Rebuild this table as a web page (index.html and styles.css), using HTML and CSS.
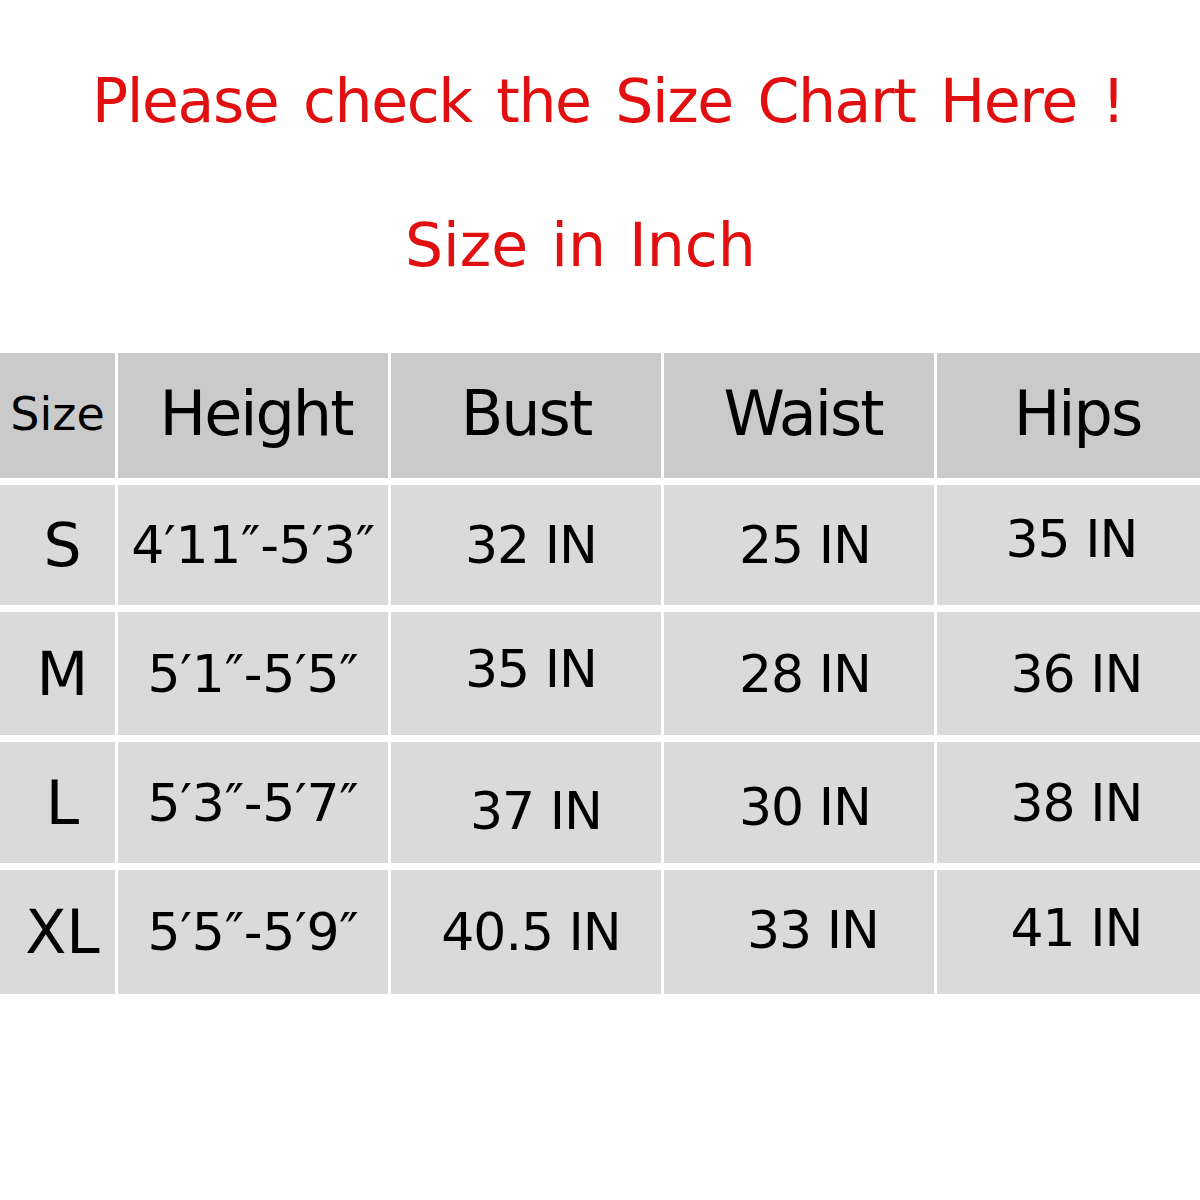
FILE: index.html
```html
<!DOCTYPE html>
<html>
<head>
<meta charset="utf-8">
<link rel="stylesheet" href="styles.css">
</head>
<body>
<div class="page">
  <h1 class="title title-main">Please check the Size Chart Here !</h1>
  <h2 class="title title-sub">Size in Inch</h2>
  <div class="chart">
    <div class="cell head head-size">Size</div>
    <div class="cell head h-height">Height</div>
    <div class="cell head">Bust</div>
    <div class="cell head h-waist">Waist</div>
    <div class="cell head h-hips">Hips</div>

    <div class="cell size">S</div>
    <div class="cell val c-height">4′11″-5′3″</div>
    <div class="cell val c-bust">32 IN</div>
    <div class="cell val c-waist">25 IN</div>
    <div class="cell val c-hips-s">35 IN</div>

    <div class="cell size">M</div>
    <div class="cell val c-height">5′1″-5′5″</div>
    <div class="cell val c-bust up-5">35 IN</div>
    <div class="cell val c-waist">28 IN</div>
    <div class="cell val c-hips">36 IN</div>

    <div class="cell size">L</div>
    <div class="cell val c-height">5′3″-5′7″</div>
    <div class="cell val c-bust-l">37 IN</div>
    <div class="cell val c-waist down-4">30 IN</div>
    <div class="cell val c-hips">38 IN</div>

    <div class="cell size">XL</div>
    <div class="cell val c-height">5′5″-5′9″</div>
    <div class="cell val c-bust">40.5 IN</div>
    <div class="cell val c-waist-xl">33 IN</div>
    <div class="cell val c-hips up-4">41 IN</div>
  </div>
</div>
</body>
</html>
```
FILE: styles.css
```css
html, body {
  margin: 0;
  padding: 0;
  background: #ffffff;
}
.page {
  width: 1200px;
  height: 1200px;
  font-family: "DejaVu Sans", Verdana, sans-serif;
  color: #000;
}
.title {
  margin: 0;
  font-weight: normal;
  color: #e10f0f;
  font-size: 60px;
  line-height: 70px;
  white-space: nowrap;
}
.title-main {
  padding-top: 66px;
  padding-left: 92px;
  letter-spacing: -1.4px;
  word-spacing: 7px;
}
.title-sub {
  padding-top: 74px;
  padding-left: 405px;
  word-spacing: 4px;
}
.chart {
  margin-top: 73px;
  display: grid;
  grid-template-columns: 115px 270px 270px 270px 1fr;
  grid-template-rows: 125px 120px 123px 121px 124px;
  column-gap: 3px;
  row-gap: 7px;
}
.cell {
  display: flex;
  align-items: center;
  justify-content: center;
  white-space: nowrap;
  background: #dadada;
}
.head {
  background: #cacaca;
  font-size: 62px;
  letter-spacing: -2px;
  padding-bottom: 4px;
}
.head-size {
  font-size: 46px;
  letter-spacing: 0;
}
.h-height { padding-left: 6px; }
.h-waist { padding-left: 8px; }
.h-hips { padding-left: 18px; }

.size {
  font-size: 60px;
  padding-left: 10px;
}
.val {
  font-size: 52px;
  letter-spacing: -1px;
}
.c-height { letter-spacing: -0.3px; }
.c-bust { padding-left: 10px; }
.c-bust-l { padding-left: 20px; padding-top: 16px; }
.c-waist { padding-left: 12px; }
.c-waist-xl { padding-left: 28px; padding-bottom: 4px; }
.c-hips { padding-left: 16px; }
.c-hips-s { padding-left: 6px; padding-bottom: 12px; }
.up-5 { padding-bottom: 10px; }
.up-4 { padding-bottom: 8px; }
.down-4 { padding-top: 8px; }
```
